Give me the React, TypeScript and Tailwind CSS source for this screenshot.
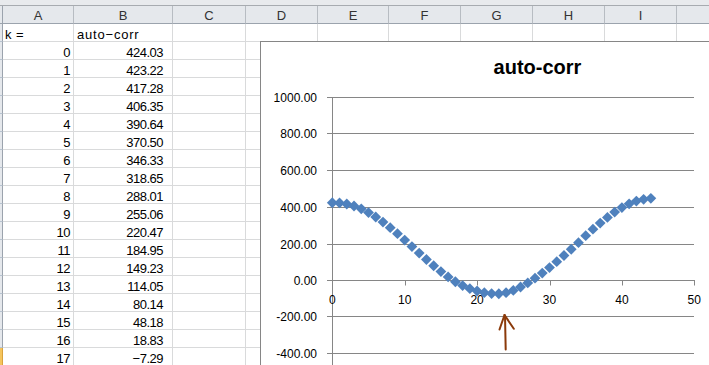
import React from "react";

const cols = ["A", "B", "C", "D", "E", "F", "G", "H", "I", ""];

const table: [number, string][] = [
  [0, "424.03"],
  [1, "423.22"],
  [2, "417.28"],
  [3, "406.35"],
  [4, "390.64"],
  [5, "370.50"],
  [6, "346.33"],
  [7, "318.65"],
  [8, "288.01"],
  [9, "255.06"],
  [10, "220.47"],
  [11, "184.95"],
  [12, "149.23"],
  [13, "114.05"],
  [14, "80.14"],
  [15, "48.18"],
  [16, "18.83"],
  [17, "−7.29"],
];

// values past k = 17 are read off the plotted curve
const series = [
  424.03, 423.22, 417.28, 406.35, 390.64, 370.5, 346.33, 318.65, 288.01, 255.06, 220.47, 184.95,
  149.23, 114.05, 80.14, 48.18, 18.83, -7.29, -28, -45, -58, -67, -72, -73, -67, -55, -36, -14, 12,
  40, 70, 102, 136, 170, 206, 244, 280, 313, 344, 373, 398, 418, 433, 443, 448,
];

const px = (k: number) => 332.3 + k * 7.24;
const py = (v: number) => 280.4 - v * 0.1831;

const grid = [1000, 800, 600, 400, 200, 0, -200, -400];
const gridY: Record<number, number> = {
  1000: 97.5,
  800: 133.5,
  600: 170.5,
  400: 207.5,
  200: 244.5,
  0: 280.5,
  [-200]: 316.5,
  [-400]: 353.5,
};

function HeaderRow() {
  return (
    <>
      <div className="h-[18px] bg-[#e5e8ec] border-r border-b border-[#9ba3ad]" />
      {cols.map((c, i) => (
        <div
          key={i}
          className="h-[18px] bg-[#e5e8ec] border-r border-b border-r-[#b7bcc2] border-b-[#9ba3ad] flex items-center justify-center text-[13px] text-[#333] leading-none pt-[2px]"
        >
          {c}
        </div>
      ))}
    </>
  );
}

function Cell({ children, className = "" }: { children?: React.ReactNode; className?: string }) {
  return (
    <div
      className={`h-[18px] border-r border-b border-[#d9dadb] flex items-end leading-[12px] text-[13px] text-black whitespace-nowrap overflow-hidden ${className}`}
    >
      {children}
    </div>
  );
}

function Chart() {
  return (
    <div className="absolute left-[260px] top-[41px] w-[555px] h-[400px] border border-[#868686] bg-white">
      <div className="pt-[13px] text-center text-[20px] leading-[24px] font-bold text-black">auto-corr</div>
      <svg
        className="absolute left-0 top-0"
        width={553}
        height={398}
        viewBox="261 42 553 398"
      >
        {grid.map((g) => (
          <line key={g} x1={327} x2={694} y1={gridY[g]} y2={gridY[g]} stroke="#868686" strokeWidth={1} />
        ))}
        <line x1={332.5} x2={332.5} y1={97} y2={440} stroke="#868686" />
        {[0, 10, 20, 30, 40, 50].map((k) => (
          <line
            key={k}
            x1={Math.round(px(k)) + 0.5}
            x2={Math.round(px(k)) + 0.5}
            y1={280}
            y2={285.5}
            stroke="#868686"
          />
        ))}
        <g fontFamily="'Liberation Sans', Arial, sans-serif" fontSize={12} fill="#000">
          {grid.map((g) => (
            <text key={g} x={317} y={gridY[g] + 4.5} textAnchor="end">
              {g.toFixed(2)}
            </text>
          ))}
          {[0, 10, 20, 30, 40, 50].map((k) => (
            <text key={k} x={px(k)} y={303.5} textAnchor="middle">
              {k}
            </text>
          ))}
        </g>
        {series.map((v, k) => {
          const x = px(k);
          const y = py(v);
          return (
            <polygon
              key={k}
              points={`${x},${y - 5.4} ${x + 5.4},${y} ${x},${y + 5.4} ${x - 5.4},${y}`}
              fill="#4f81bd"
            />
          );
        })}
        <g stroke="#8b3a0a" strokeWidth={2} fill="none" strokeLinecap="round">
          <line x1={505.7} y1={349.5} x2={505} y2={315.5} />
          <line x1={504.5} y1={315} x2={499.5} y2={329.5} />
          <line x1={504.5} y1={315} x2={513.8} y2={328.8} />
        </g>
      </svg>
    </div>
  );
}

export default function App() {
  return (
    <div
      className="relative w-[709px] h-[365px] overflow-hidden bg-white"
      style={{ fontFamily: "'Liberation Sans', Arial, sans-serif" }}
    >
      <div className="h-[6px] bg-[#e8eaed] border-b border-[#a7abb0]" />
      <div className="grid grid-cols-[3px_71px_99px_73px_72px_71px_72px_72px_72px_72px_72px] w-[749px]">
        <HeaderRow />

        <div className="h-[18px] bg-[#e5e8ec] border-r border-b border-r-[#9ba3ad] border-b-[#b7c3d0]" />
        <Cell className="pl-[2px] tracking-[0.5px]">k =</Cell>
        <Cell className="pl-[3px] tracking-[0.8px]">auto−corr</Cell>
        {Array.from({ length: 8 }).map((_, i) => (
          <Cell key={i} />
        ))}

        {table.map(([k, v]) => (
          <React.Fragment key={k}>
            <div
              className={
                k === 17
                  ? "h-[18px] bg-[#f5c45c] border-r border-b border-[#d9a23c]"
                  : "h-[18px] bg-[#e5e8ec] border-r border-b border-r-[#9ba3ad] border-b-[#b7c3d0]"
              }
            />
            <Cell className="justify-end pr-[3px] tracking-[-0.5px]">{k}</Cell>
            <Cell className="justify-end pr-[9px] tracking-[-0.5px]">{v}</Cell>
            {Array.from({ length: 8 }).map((_, i) => (
              <Cell key={i} />
            ))}
          </React.Fragment>
        ))}
      </div>
      <Chart />
    </div>
  );
}
